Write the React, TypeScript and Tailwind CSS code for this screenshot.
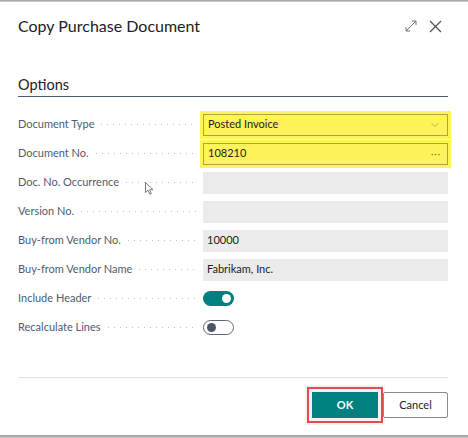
import { ChevronDown } from 'lucide-react';

type Row = {
  label: string;
  kind: 'select' | 'lookup' | 'text' | 'on' | 'off';
  value?: string;
};

const ROWS: Row[] = [
  { label: 'Document Type', kind: 'select', value: 'Posted Invoice' },
  { label: 'Document No.', kind: 'lookup', value: '108210' },
  { label: 'Doc. No. Occurrence', kind: 'text' },
  { label: 'Version No.', kind: 'text' },
  { label: 'Buy-from Vendor No.', kind: 'text', value: '10000' },
  { label: 'Buy-from Vendor Name', kind: 'text', value: 'Fabrikam, Inc.' },
  { label: 'Include Header', kind: 'on' },
  { label: 'Recalculate Lines', kind: 'off' },
];

function ExpandIcon() {
  return (
    <svg width="12" height="12" viewBox="0 0 12 12" fill="none" stroke="#707070" strokeWidth="1">
      <path d="M1 11L11 1M7 1H11V5M1 7V11H5" />
    </svg>
  );
}

function CloseIcon() {
  return (
    <svg width="13" height="13" viewBox="0 0 13 13" fill="none" stroke="#505050" strokeWidth="1.2">
      <path d="M1 1L12 12M12 1L1 12" />
    </svg>
  );
}

function Field({ row }: { row: Row }) {
  if (row.kind === 'on') {
    return (
      <div className="flex h-[15px] w-[31px] items-center justify-end rounded-full bg-[#00807f] pr-[3px]">
        <span className="h-[9px] w-[9px] rounded-full bg-white" />
      </div>
    );
  }
  if (row.kind === 'off') {
    return (
      <div className="flex h-[15px] w-[31px] items-center rounded-full border border-[#5f6673] bg-white pl-[3px]">
        <span className="h-[9px] w-[9px] rounded-full bg-[#4c5566]" />
      </div>
    );
  }
  if (row.kind === 'select' || row.kind === 'lookup') {
    return (
      <div className="flex h-[22px] flex-1 items-center justify-between border border-[#a9a642] bg-[#fff35c] pl-[4px] pr-[6px] text-[11px] text-[#212121] shadow-[0_0_0_3px_#fff35c]">
        <span>{row.value}</span>
        {row.kind === 'select' ? (
          <ChevronDown size={12} strokeWidth={1.2} className="text-[#7d7c4a]" />
        ) : (
          <span className="text-[9px] tracking-[1px] text-[#6b6b3a]">···</span>
        )}
      </div>
    );
  }
  return (
    <div className="flex h-[22px] flex-1 items-center bg-[#ebebeb] pl-[4px] text-[11px] text-[#212121]">
      {row.value}
    </div>
  );
}

export default function App() {
  return (
    <div className="relative flex h-[438px] w-[468px] flex-col overflow-hidden bg-white font-['Lato','Open_Sans',sans-serif]">
      <div className="h-[2px] bg-gradient-to-b from-[#9a9a9a] to-[#d8d8d8]" />

      <div className="flex h-[48px] items-center justify-between pl-[18px] pr-[26px]">
        <h1 className="text-[16px] text-[#212121]">Copy Purchase Document</h1>
        <div className="flex items-center gap-[12px]">
          <ExpandIcon />
          <CloseIcon />
        </div>
      </div>

      <div className="mx-[18px] mt-[25px] w-[430px] border-b border-[#505c6d] pb-[1px]">
        <div className="h-[20px] text-[14.5px] leading-[20px] text-[#212121]">Options</div>
      </div>

      <div className="mt-[13px] flex flex-col pl-[18px] pr-[20px]">
        {ROWS.map((r) => (
          <div key={r.label} className="flex h-[29px] items-center">
            <div className="flex w-[185px] items-center pr-[7px]">
              <span className="whitespace-nowrap text-[11px] text-[#505c6d]">{r.label}</span>
              <div className="ml-[7px] h-px flex-1 bg-[linear-gradient(to_right,#bcc0c6_1px,transparent_1px)] bg-[length:6px_1px]" />
            </div>
            <Field row={r} />
          </div>
        ))}
      </div>

      <div className="mx-[18px] mt-[35px] w-[430px] border-t border-[#e1e1e1]" />

      <div className="mr-[20px] mt-[14px] flex justify-end gap-[5px]">
        <button className="h-[26px] w-[66px] rounded-none bg-[#00807f] text-[11px] font-bold text-white outline outline-2 outline-offset-[3px] outline-[#e5484d] shadow-[0_0_0_7px_rgba(0,0,0,0.05)]">
          OK
        </button>
        <button className="h-[26px] w-[65px] rounded-[2px] border border-[#8a8a8a] bg-white text-[11px] text-[#212121]">
          Cancel
        </button>
      </div>

      <div className="mt-auto h-[3px] bg-gradient-to-b from-[#9c9c9c] to-[#c8c8c8]" />

      <svg
        className="absolute left-[145px] top-[182px]"
        width="9"
        height="13"
        viewBox="0 0 9 13"
        fill="white"
        stroke="#6e6e6e"
        strokeWidth="0.9"
      >
        <path d="M0.5 0.5V10.5L3 8.2L4.8 12.3L6.3 11.6L4.6 7.7H8L0.5 0.5Z" />
      </svg>
    </div>
  );
}
